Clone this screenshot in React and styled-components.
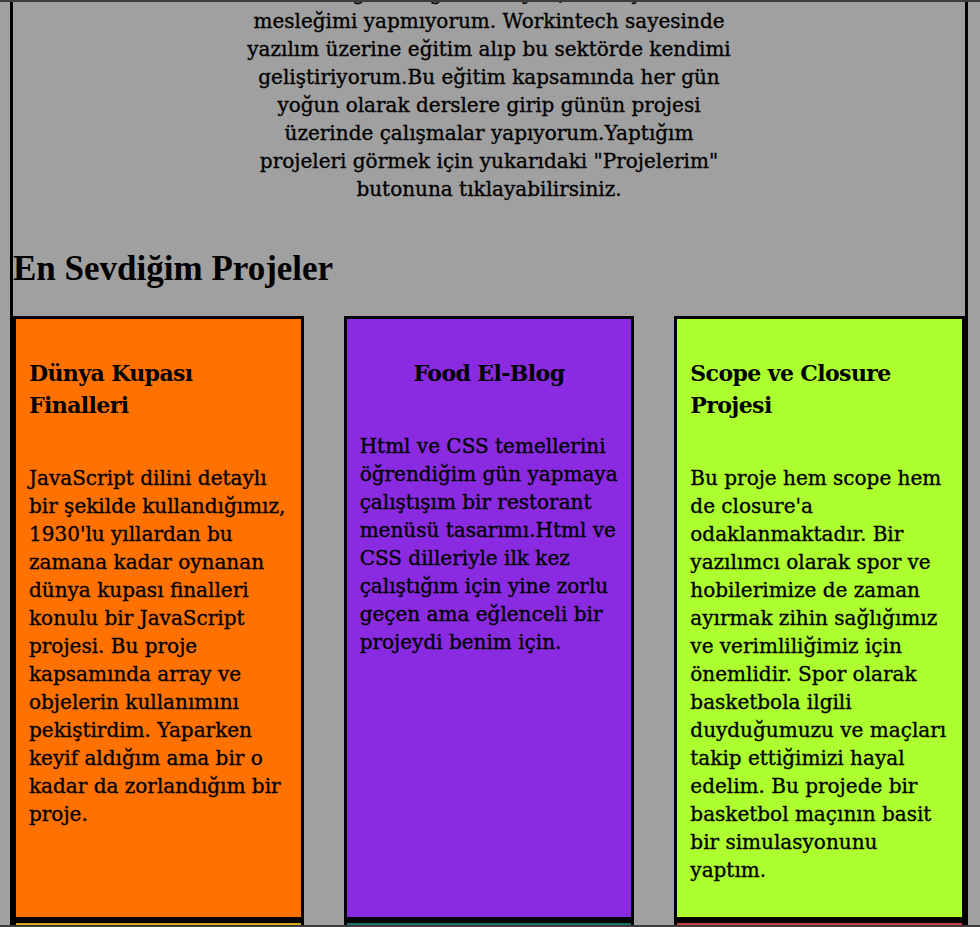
import React from "react";
import styled, { createGlobalStyle } from "styled-components";

const Global = createGlobalStyle`
  html, body {
    margin: 0;
    padding: 0;
    background: #a0a0a0;
  }
  * { box-sizing: border-box; }
`;

const Screen = styled.div`
  height: 927px;
  border-top: 2px solid #3c3c3c;
  border-bottom: 2px solid #3c3c3c;
  overflow: hidden;
  background: #a0a0a0;
  color: #000;
  font-family: "DejaVu Serif", serif;
`;

const Page = styled.main`
  margin: -23px 0 0 10px;
  width: 958px;
  border-left: 3px solid #000;
  border-right: 3px solid #000;
`;

const About = styled.p`
  width: 500px;
  margin: 0 auto;
  text-align: center;
  font-size: 20px;
  line-height: 28px;
  -webkit-text-stroke: 0.35px currentColor;
`;

const SectionTitle = styled.h2`
  margin: 46px 0 27px;
  font-family: "Liberation Serif", serif;
  font-weight: bold;
  font-size: 35px;
  line-height: 40px;
`;

const Grid = styled.section`
  display: grid;
  grid-template-columns: repeat(3, 1fr);
  column-gap: 40px;
  row-gap: 0;
`;

const Card = styled.article`
  background: ${(p) => p.$bg};
  border: 3px solid #000;
  padding: 0 13px;
`;

const CardTitle = styled.h3`
  margin: 38px 0 43px;
  font-size: 22px;
  line-height: 32px;
  letter-spacing: -0.6px;
  font-weight: bold;
  text-align: ${(p) => (p.$center ? "center" : "left")};
`;

const CardText = styled.p`
  margin: 0 0 33px;
  font-size: 20px;
  line-height: 28px;
  -webkit-text-stroke: 0.35px currentColor;
`;

const projects = [
  {
    bg: "#ff7100",
    title: "Dünya Kupası Finalleri",
    text: "JavaScript dilini detaylı bir şekilde kullandığımız, 1930'lu yıllardan bu zamana kadar oynanan dünya kupası finalleri konulu bir JavaScript projesi. Bu proje kapsamında array ve objelerin kullanımını pekiştirdim. Yaparken keyif aldığım ama bir o kadar da zorlandığım bir proje.",
  },
  {
    bg: "#8a2be2",
    title: "Food El-Blog",
    center: true,
    text: "Html ve CSS temellerini öğrendiğim gün yapmaya çalıştışım bir restorant menüsü tasarımı.Html ve CSS dilleriyle ilk kez çalıştığım için yine zorlu geçen ama eğlenceli bir projeydi benim için.",
  },
  {
    bg: "#adff2f",
    title: "Scope ve Closure Projesi",
    text: "Bu proje hem scope hem de closure'a odaklanmaktadır. Bir yazılımcı olarak spor ve hobilerimize de zaman ayırmak zihin sağlığımız ve verimliliğimiz için önemlidir. Spor olarak basketbola ilgili duyduğumuzu ve maçları takip ettiğimizi hayal edelim. Bu projede bir basketbol maçının basit bir simulasyonunu yaptım.",
  },
  {
    bg: "#daa520",
    title: "Flexbox Projesi",
    text: "Flexbox kullanarak duyarlı bir sayfa tasarımı yaptığım bir proje.",
  },
  {
    bg: "#1e6e6e",
    title: "Döngüler Projesi",
    text: "Döngüleri ve fonksiyonları pekiştirdiğim bir JavaScript projesi.",
  },
  {
    bg: "#c8404c",
    title: "Portfolyo Sayfası",
    text: "Öğrendiğim tüm konuları bir araya getirdiğim kişisel sayfam.",
  },
];

export default function App() {
  return (
    <>
      <Global />
      <Screen>
        <Page>
          <About>
            Beden eğitimi öğretmeniyim, fakat şu anda mesleğimi yapmıyorum.
            Workintech sayesinde yazılım üzerine eğitim alıp bu sektörde kendimi
            geliştiriyorum.Bu eğitim kapsamında her gün yoğun olarak derslere
            girip günün projesi üzerinde çalışmalar yapıyorum.Yaptığım projeleri
            görmek için yukarıdaki "Projelerim" butonuna tıklayabilirsiniz.
          </About>
          <SectionTitle>En Sevdiğim Projeler</SectionTitle>
          <Grid>
            {projects.map((p) => (
              <Card key={p.title} $bg={p.bg}>
                <CardTitle $center={p.center}>{p.title}</CardTitle>
                <CardText>{p.text}</CardText>
              </Card>
            ))}
          </Grid>
        </Page>
      </Screen>
    </>
  );
}
